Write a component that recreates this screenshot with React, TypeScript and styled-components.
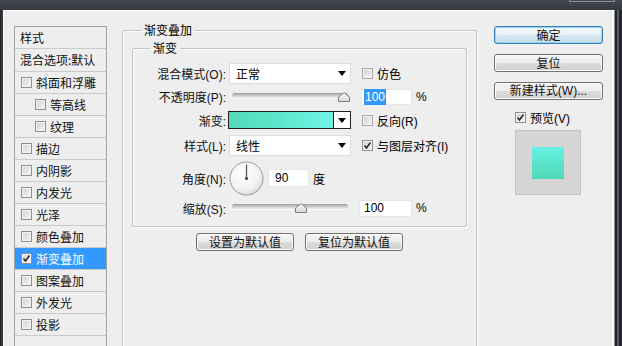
import React from 'react';
import styled, { createGlobalStyle } from 'styled-components';

const GlobalStyle = createGlobalStyle`
  html, body { margin: 0; padding: 0; background: #2c3036; }
  body {
    font-family: "Liberation Sans", "Noto Sans CJK SC", sans-serif;
    font-size: 12px;
    color: #000;
  }
  * { box-sizing: border-box; }
`;

const Screen = styled.div`
  width: 622px;
  height: 346px;
  overflow: hidden;
  display: flex;
  flex-direction: column;
  background: #2c3036;
`;

const TitleBar = styled.div`
  height: 10px;
  flex: none;
  display: flex;
  justify-content: flex-end;
  padding-right: 7px;
  background: linear-gradient(#464a50, #363a40);
`;

const CloseEdge = styled.div`
  width: 46px;
  height: 2px;
  border: 1px solid #8a8e94;
  border-top: none;
`;

const Body = styled.div`
  flex: 1;
  display: flex;
  min-height: 0;
`;

const LeftEdge = styled.div`
  width: 3px;
  flex: none;
  background: linear-gradient(to right, #23272d, #3a3f46);
`;

const RightEdge = styled.div`
  width: 7px;
  flex: none;
  background: linear-gradient(to right, #23272d 0 2px, #575c63 2px 4px, #23272d 4px);
`;

const Window = styled.div`
  flex: 1;
  display: flex;
  align-items: flex-start;
  background: #eeeeee;
  border-top: 1px solid #fafafa;
  border-left: 1px solid #fafafa;
  border-right: 1px solid #8c8c8c;
  box-shadow: inset -2px 0 0 #f8f8f8;
  padding: 12px 0 0 10px;
  overflow: hidden;
`;

/* ---------- left style list ---------- */
const StyleList = styled.div`
  width: 93px;
  height: 360px;
  flex: none;
  margin-top: 3px;
  border: 1px solid #a3a3a3;
  border-bottom: none;
  font-family: "Noto Sans CJK SC", sans-serif;
`;

const ListRow = styled.div<{ $indent?: boolean; $selected?: boolean; $header?: boolean; $h?: number }>`
  height: ${p => p.$h ?? 22}px;
  display: flex;
  align-items: center;
  gap: 4px;
  padding-left: ${p => (p.$header ? 5 : p.$indent ? 20 : 6)}px;
  border-bottom: 1px solid #cacaca;
  background: ${p => (p.$selected ? '#3399ff' : 'transparent')};
  color: ${p => (p.$selected ? '#fff' : '#111')};
  white-space: nowrap;
  overflow: hidden;
  line-height: 1;
`;

const Box = styled.span<{ $dim?: boolean }>`
  width: 11px;
  height: 11px;
  flex: none;
  display: inline-flex;
  align-items: center;
  justify-content: center;
  border: 1px solid ${p => (p.$dim ? '#a8a8a8' : '#8e8f8f')};
  background: linear-gradient(135deg, #cfd0d2, #f7f7f7);
  box-shadow: inset 0 0 0 1px #f3f3f3;
`;

const CheckBox: React.FC<{ checked?: boolean; dim?: boolean }> = ({ checked, dim }) => (
  <Box $dim={dim}>
    {checked && (
      <svg width="9" height="9" viewBox="0 0 9 9">
        <path d="M1.5 4.5 L3.5 7 L7.5 1.5" fill="none" stroke="#2a2a2a" strokeWidth="1.6" />
      </svg>
    )}
  </Box>
);

/* ---------- main panel ---------- */
const Main = styled.div`
  width: 355px;
  flex: none;
  margin-left: 15px;
`;

const GroupBox = styled.fieldset<{ $h?: number }>`
  margin: 0;
  padding: 0;
  min-width: 0;
  border: 1px solid #c3c3c3;
  border-radius: 2px;
  box-shadow: 1px 1px 0 #fbfbfb, inset 1px 1px 0 #fbfbfb;
  ${p => (p.$h ? `height: ${p.$h}px;` : '')}
`;

const InnerGroup = styled(GroupBox)`
  margin: 4px 9px 0 9px;
  padding: 7px 0 8px 0;
`;

const Legend = styled.legend<{ $offset: number }>`
  margin-left: ${p => p.$offset}px;
  padding: 0 3px;
  font-family: "Noto Sans CJK SC", sans-serif;
  font-size: 12px;
  line-height: 14px;
  height: 14px;
`;

const FormRow = styled.div<{ $h: number }>`
  height: ${p => p.$h}px;
  display: flex;
  align-items: center;
`;

const Label = styled.div`
  width: 93px;
  flex: none;
  text-align: right;
  white-space: nowrap;
  color: #111;
`;

const Control = styled.div`
  width: 122px;
  flex: none;
  margin-left: 3px;
  display: flex;
  align-items: center;
`;

const Extra = styled.div<{ $ml?: number }>`
  margin-left: ${p => p.$ml ?? 11}px;
  display: flex;
  align-items: center;
  gap: 4px;
  white-space: nowrap;
`;

const Select = styled.div`
  width: 122px;
  height: 21px;
  background: #fff;
  border: 1px solid #dcdcdc;
  display: flex;
  align-items: center;
  justify-content: space-between;
  padding: 0 4px 0 6px;
`;

const Arrow = styled.span`
  width: 0;
  height: 0;
  border-left: 4px solid transparent;
  border-right: 4px solid transparent;
  border-top: 5px solid #000;
`;

const GradientPicker = styled.div`
  width: 123px;
  height: 18px;
  margin-left: -1px;
  border: 1px solid #1e1e1e;
  display: flex;
  background: #fff;
`;

const GradientFill = styled.div`
  flex: 1;
  background: linear-gradient(to right, #52d9b6, #70f3e6);
  border-right: 1px solid #1e1e1e;
`;

const PickerArrow = styled.div`
  width: 16px;
  display: flex;
  align-items: center;
  justify-content: center;
`;

const SliderWrap = styled.div`
  position: relative;
  width: 116px;
  height: 12px;
  margin-left: 3px;
`;

const Track = styled.div`
  position: absolute;
  left: 0;
  right: 0;
  top: 2px;
  height: 5px;
  border-radius: 3px;
  background: linear-gradient(#9c9c9c, #d2d2d2 60%, #ececec);
  box-shadow: 0 1px 0 #fafafa;
`;

const Thumb = styled.svg`
  position: absolute;
  top: 1px;
`;

const Slider: React.FC<{ value: number }> = ({ value }) => (
  <SliderWrap>
    <Track />
    <Thumb width="12" height="10" viewBox="0 0 12 10" style={{ left: `${value * 1.1 - 4}px` }}>
      <defs>
        <linearGradient id={`tg${value}`} x1="0" y1="0" x2="0" y2="1">
          <stop offset="0" stopColor="#fdfdfd" />
          <stop offset="1" stopColor="#d6d6d6" />
        </linearGradient>
      </defs>
      <polygon points="0.5,9.5 0.5,5 6,0.5 11.5,5 11.5,9.5" fill={`url(#tg${value})`} stroke="#7c7c7c" />
    </Thumb>
  </SliderWrap>
);

const NumInput = styled.div<{ $w: number; $h?: number }>`
  width: ${p => p.$w}px;
  height: ${p => p.$h ?? 16}px;
  background: #fff;
  border: 1px solid #e6e6e6;
  display: flex;
  align-items: center;
  padding-left: 2px;
  font-size: 12px;
`;

const Selected = styled.span`
  background: #3399ff;
  color: #fff;
  padding: 1px 1px;
`;

const Dial = styled.svg`
  flex: none;
`;

const ButtonRow = styled.div`
  display: flex;
  justify-content: center;
  gap: 11px;
  margin-top: 6px;
`;

const Button = styled.div<{ $w?: number; $default?: boolean }>`
  width: ${p => (p.$w ? `${p.$w}px` : '100%')};
  height: 18px;
  display: flex;
  align-items: center;
  justify-content: center;
  border: 1px solid ${p => (p.$default ? '#3c7fb1' : '#707070')};
  border-radius: 3px;
  background: ${p =>
    p.$default
      ? 'linear-gradient(#f2f8fb 0%, #e6f1f7 50%, #d6e6ef 51%, #c8dde9 100%)'
      : 'linear-gradient(#f4f4f4 0%, #ececec 50%, #dddddd 51%, #cfcfcf 100%)'};
  box-shadow: ${p => (p.$default ? 'inset 0 0 0 1px #8fd6f5' : 'inset 0 0 0 1px #fcfcfc')};
  font-family: "Noto Sans CJK SC", sans-serif;
  font-size: 12px;
  color: #111;
  white-space: nowrap;
  line-height: 1;
`;

/* ---------- right column ---------- */
const Side = styled.div`
  width: 109px;
  flex: none;
  margin-left: 17px;
  margin-top: 3px;
  display: flex;
  flex-direction: column;
  gap: 10px;
`;

const SideButtonLabel = styled.span`
  font-family: "Liberation Sans", "Noto Sans CJK SC", sans-serif;
`;

const PreviewRow = styled.div`
  display: flex;
  align-items: center;
  gap: 4px;
  margin-left: 21px;
  margin-top: -1px;
  height: 16px;
  white-space: nowrap;
`;

const PreviewBox = styled.div`
  width: 66px;
  height: 65px;
  margin-left: 21px;
  margin-top: -5px;
  background: #d6d6d6;
  border: 1px solid #c2c2c2;
  display: flex;
  align-items: center;
  justify-content: center;
`;

const Swatch = styled.div`
  width: 32px;
  height: 32px;
  background: linear-gradient(#66f1e2, #4fd9b7);
`;

const Text = styled.span`
  font-family: "Liberation Sans", "Noto Sans CJK SC", sans-serif;
`;

const listItems: { label: string; indent?: boolean; checked?: boolean; selected?: boolean }[] = [
  { label: '斜面和浮雕' },
  { label: '等高线', indent: true },
  { label: '纹理', indent: true },
  { label: '描边' },
  { label: '内阴影' },
  { label: '内发光' },
  { label: '光泽' },
  { label: '颜色叠加' },
  { label: '渐变叠加', checked: true, selected: true },
  { label: '图案叠加' },
  { label: '外发光' },
  { label: '投影' },
];

export default function App() {
  return (
    <>
      <GlobalStyle />
      <Screen>
        <TitleBar>
          <CloseEdge />
        </TitleBar>
        <Body>
          <LeftEdge />
          <Window>
            <StyleList>
              <ListRow $header>样式</ListRow>
              <ListRow $header $h={23}>混合选项:默认</ListRow>
              {listItems.map(it => (
                <ListRow key={it.label} $indent={it.indent} $selected={it.selected}>
                  <CheckBox checked={it.checked} />
                  {it.label}
                </ListRow>
              ))}
            </StyleList>

            <Main>
              <GroupBox $h={340}>
                <Legend $offset={18}>渐变叠加</Legend>
                <InnerGroup>
                  <Legend $offset={17}>渐变</Legend>
                  <FormRow $h={23}>
                    <Label>混合模式(O):</Label>
                    <Control>
                      <Select>
                        <Text>正常</Text>
                        <Arrow />
                      </Select>
                    </Control>
                    <Extra>
                      <CheckBox dim />
                      <Text>仿色</Text>
                    </Extra>
                  </FormRow>
                  <FormRow $h={23}>
                    <Label>不透明度(P):</Label>
                    <Control>
                      <Slider value={100} />
                    </Control>
                    <Extra $ml={10}>
                      <NumInput $w={51}>
                        <Selected>100</Selected>
                      </NumInput>
                      <Text>%</Text>
                    </Extra>
                  </FormRow>
                  <FormRow $h={24}>
                    <Label>渐变:</Label>
                    <Control>
                      <GradientPicker>
                        <GradientFill />
                        <PickerArrow>
                          <Arrow />
                        </PickerArrow>
                      </GradientPicker>
                    </Control>
                    <Extra>
                      <CheckBox dim />
                      <Text>反向(R)</Text>
                    </Extra>
                  </FormRow>
                  <FormRow $h={26}>
                    <Label>样式(L):</Label>
                    <Control>
                      <Select>
                        <Text>线性</Text>
                        <Arrow />
                      </Select>
                    </Control>
                    <Extra>
                      <CheckBox checked />
                      <Text>与图层对齐(I)</Text>
                    </Extra>
                  </FormRow>
                  <FormRow $h={40}>
                    <Label>角度(N):</Label>
                    <Control>
                      <Dial width="35" height="35" viewBox="0 0 35 35">
                        <defs>
                          <radialGradient id="dialg" cx="0.4" cy="0.35" r="0.7">
                            <stop offset="0" stopColor="#ffffff" />
                            <stop offset="0.7" stopColor="#f1f1f1" />
                            <stop offset="1" stopColor="#d8d8d8" />
                          </radialGradient>
                        </defs>
                        <circle cx="17.5" cy="17.5" r="16.5" fill="url(#dialg)" stroke="#9a9a9a" />
                        <line x1="17.5" y1="17.5" x2="17.5" y2="3.5" stroke="#5a5a5a" strokeWidth="1.3" />
                        <circle cx="17.5" cy="17.5" r="1.6" fill="#444" />
                      </Dial>
                      <Extra $ml={4}>
                        <NumInput $w={41} $h={18}>
                          <span style={{ paddingLeft: 4 }}>90</span>
                        </NumInput>
                        <Text>度</Text>
                      </Extra>
                    </Control>
                  </FormRow>
                  <FormRow $h={20}>
                    <Label>缩放(S):</Label>
                    <Control>
                      <Slider value={61} />
                    </Control>
                    <Extra $ml={8}>
                      <NumInput $w={53} $h={17}>
                        <span style={{ paddingLeft: 2 }}>100</span>
                      </NumInput>
                      <Text>%</Text>
                    </Extra>
                  </FormRow>
                </InnerGroup>
                <ButtonRow>
                  <Button $w={98}>设置为默认值</Button>
                  <Button $w={98}>复位为默认值</Button>
                </ButtonRow>
              </GroupBox>
            </Main>

            <Side>
              <Button $default>确定</Button>
              <Button>复位</Button>
              <Button>
                <SideButtonLabel>新建样式(W)...</SideButtonLabel>
              </Button>
              <PreviewRow>
                <CheckBox checked />
                <Text>预览(V)</Text>
              </PreviewRow>
              <PreviewBox>
                <Swatch />
              </PreviewBox>
            </Side>
          </Window>
          <RightEdge />
        </Body>
      </Screen>
    </>
  );
}
